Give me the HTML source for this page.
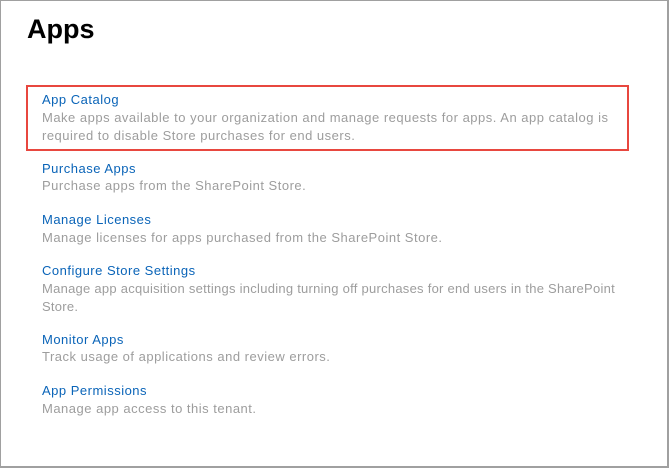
<!DOCTYPE html>
<html><head><style>
body{margin:0;width:669px;height:468px;overflow:hidden;background:#fff;font-family:"Liberation Sans",sans-serif;}
.frame{position:absolute;left:0;top:0;border-left:1px solid #a0a0a0;border-top:1px solid #a0a0a0;border-right:2px solid #a0a0a0;border-bottom:2px solid #a0a0a0;box-sizing:border-box;width:669px;height:468px;}
h1{position:absolute;left:27px;top:12px;margin:0;font-size:27px;font-weight:bold;color:#000;line-height:34px;}
.t,.d{position:absolute;left:42px;font-size:13px;letter-spacing:0.5px;line-height:18px;white-space:nowrap;}
.t{color:#0a64b8;}
.d{color:#9d9d9d;}
.box{position:absolute;left:26px;top:85px;width:603px;height:66px;border:2px solid #e8473f;box-sizing:border-box;}
</style></head><body>
<div class="frame"></div>
<h1>Apps</h1>
<div class="box"></div>
<div class="t" style="top:91px">App Catalog</div>
<div class="d" style="top:109px">Make apps available to your organization and manage requests for apps. An app catalog is<br>required to disable Store purchases for end users.</div>
<div class="t" style="top:160px">Purchase Apps</div>
<div class="d" style="top:177px">Purchase apps from the SharePoint Store.</div>
<div class="t" style="top:211px">Manage Licenses</div>
<div class="d" style="top:229px">Manage licenses for apps purchased from the SharePoint Store.</div>
<div class="t" style="top:262px">Configure Store Settings</div>
<div class="d" style="top:280px;letter-spacing:0.26px">Manage app acquisition settings including turning off purchases for end users in the SharePoint<br>Store.</div>
<div class="t" style="top:331px">Monitor Apps</div>
<div class="d" style="top:348px">Track usage of applications and review errors.</div>
<div class="t" style="top:382px">App Permissions</div>
<div class="d" style="top:400px">Manage app access to this tenant.</div>
</body></html>
